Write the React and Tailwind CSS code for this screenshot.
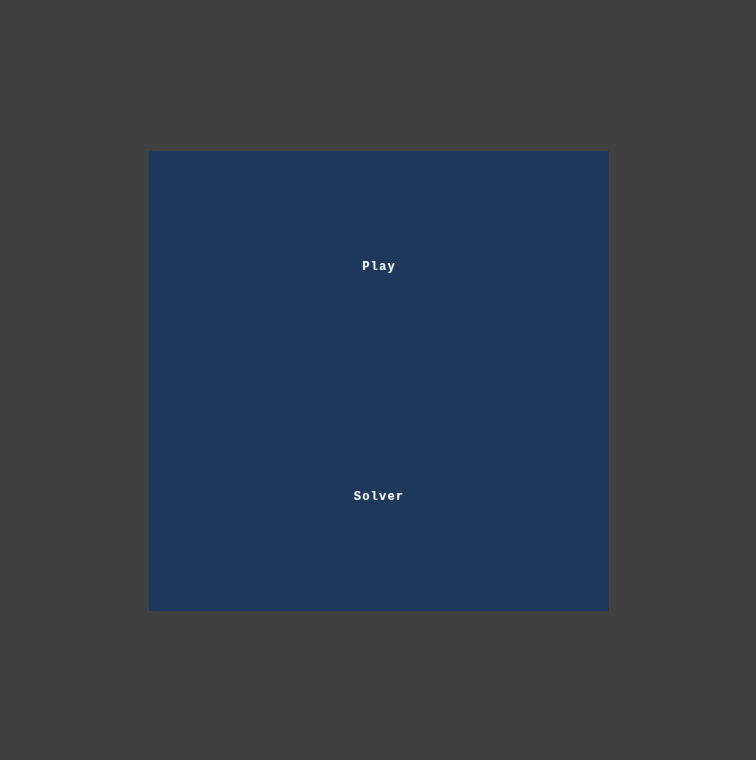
import React from "react";

function App() {
  const items = ["Play", "Solver"];

  return (
    <div className="min-h-screen w-full bg-[#404040] flex items-center justify-center pl-[2px] pt-[2px]">
      <div className="w-[460px] h-[460px] bg-[#1e385c] flex flex-col">
        {items.map((label) => (
          <button
            key={label}
            className="flex-1 flex items-center justify-center pt-[2px] text-white text-[12px] font-bold tracking-[1.2px] font-['Liberation_Mono',monospace]"
          >
            {label}
          </button>
        ))}
      </div>
    </div>
  );
}

export default App;
